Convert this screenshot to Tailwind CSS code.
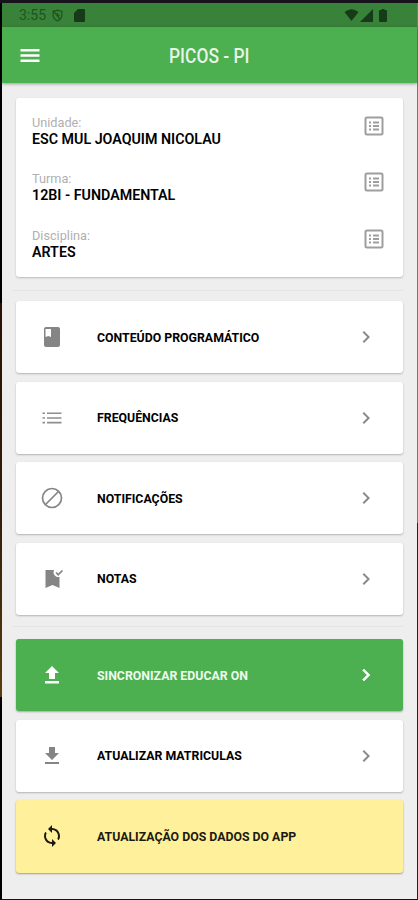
<!DOCTYPE html>
<html lang="pt-BR">
  <head>
    <meta charset="UTF-8" />
    <meta name="viewport" content="width=device-width, initial-scale=1.0" />
    <title>Picos - PI</title>
    <script src="https://cdn.jsdelivr.net/npm/@tailwindcss/browser@4"></script>
  </head>
  <body class="bg-[#17131d] font-['Roboto',sans-serif]">
    <div class="flex h-[900px] w-[418px] overflow-hidden pt-[3px]">
      <!-- Desktop strip left of the device -->
      <div class="flex w-[2px] shrink-0 flex-col bg-black">
        <div class="mt-[300px] h-[394px] bg-linear-to-b from-[#2a1005] via-[#2e1d08] to-[#5a3c10]"></div>
      </div>

      <div class="flex h-[896px] w-[415px] shrink-0 flex-col bg-[#eeeeee]">
        <!-- Status bar -->
        <div class="flex h-6 shrink-0 items-center bg-[#388339] pl-[17px] pr-[30px] text-[#173a18]">
          <span class="inline-block w-[31px] text-[14px] leading-none text-[#1f5420]">3:55</span>
          <svg class="ml-px size-[13px]" viewBox="0 0 24 24" fill="none" stroke="#1f5420" stroke-width="2.4">
            <path d="M4 4q4 0 8-2 4 2 8 2v8c0 5-4 8-8 10-4-2-8-5-8-10z" />
            <path d="M4 3l13 16M12 7v5h4" />
          </svg>
          <svg class="ml-[10px] h-[13px] w-[11px]" viewBox="0 0 11 13" fill="currentColor">
            <path d="M4 0h6q1 0 1 1v11q0 1-1 1H1q-1 0-1-1V4z" />
          </svg>
          <svg class="ml-auto h-3 w-[15px]" viewBox="0 0 15 12" fill="currentColor">
            <path d="M.5 3Q7.500-2.500 14.500 3L7.500 12z" />
          </svg>
          <svg class="ml-[1px] size-[13px]" viewBox="0 0 13 13" fill="currentColor"><path d="M13 0v13H0z" /></svg>
          <svg class="ml-[6px] h-[13px] w-2" viewBox="0 0 8 13" fill="currentColor">
            <path d="M2.500 0h3v1H7q1 0 1 1v10q0 1-1 1H1q-1 0-1-1V2q0-1 1-1h1.500z" />
          </svg>
        </div>

        <!-- App bar -->
        <header class="relative flex h-14 shrink-0 items-center bg-[#4caf50] pl-4 shadow-[0_1px_3px_rgba(0,0,0,0.35)]">
          <svg class="size-6 shrink-0" viewBox="0 0 24 24" fill="#fff">
            <path d="M2.500 18.500h19V16h-19v2.500zm0-5.200h19v-2.500h-19v2.500zm0-7.700v2.500h19V5.600h-19z" transform="translate(0 .5)" />
          </svg>
          <div class="flex flex-1 justify-center pr-[41px] pt-[2px]">
            <h1 class="scale-x-[0.87] whitespace-nowrap text-[20px] font-medium text-[#e6f5e6]">PICOS - PI</h1>
          </div>
        </header>

        <main class="flex flex-1 flex-col pl-[14px] pr-[14.500px] pt-[15px]">
          <section class="flex h-[178.500px] shrink-0 flex-col rounded-[3px] bg-white pl-4 pr-[16.500px] pt-4 shadow-[0_1px_2px_rgba(0,0,0,0.22)]">
            <div class="flex h-[56.400px] shrink-0 justify-between">
              <div>
                <p class="w-max origin-left scale-x-[0.94] text-[13.500px] leading-[16px] text-[#b0b0b0]">Unidade:</p>
                <p class="w-max origin-left scale-x-[0.95] text-[15px] font-semibold leading-[18px] text-black">ESC MUL JOAQUIM NICOLAU</p>
              </div>
              <svg class="size-6" viewBox="0 0 24 24" fill="none" stroke="#9e9e9e">
                <rect x="3.500" y="3.500" width="17" height="17" rx="1.500" stroke-width="2" />
                <path d="M7 8.500h2M7 12h2M7 15.500h2M11 8.500h6M11 12h6M11 15.500h6" stroke-width="1.800" />
              </svg>
            </div>
            <div class="flex h-[56.400px] shrink-0 justify-between">
              <div>
                <p class="w-max origin-left scale-x-[0.94] text-[13.500px] leading-[16px] text-[#b0b0b0]">Turma:</p>
                <p class="w-max origin-left scale-x-[0.95] text-[15px] font-semibold leading-[18px] text-black">12BI - FUNDAMENTAL</p>
              </div>
              <svg class="size-6" viewBox="0 0 24 24" fill="none" stroke="#9e9e9e">
                <rect x="3.500" y="3.500" width="17" height="17" rx="1.500" stroke-width="2" />
                <path d="M7 8.500h2M7 12h2M7 15.500h2M11 8.500h6M11 12h6M11 15.500h6" stroke-width="1.800" />
              </svg>
            </div>
            <div class="flex h-[56.400px] shrink-0 justify-between">
              <div>
                <p class="w-max origin-left scale-x-[0.94] text-[13.500px] leading-[16px] text-[#b0b0b0]">Disciplina:</p>
                <p class="w-max origin-left scale-x-[0.95] text-[15px] font-semibold leading-[18px] text-black">ARTES</p>
              </div>
              <svg class="size-6" viewBox="0 0 24 24" fill="none" stroke="#9e9e9e">
                <rect x="3.500" y="3.500" width="17" height="17" rx="1.500" stroke-width="2" />
                <path d="M7 8.500h2M7 12h2M7 15.500h2M11 8.500h6M11 12h6M11 15.500h6" stroke-width="1.800" />
              </svg>
            </div>
          </section>

          <div class="-ml-1 mt-[13px] h-px shrink-0 bg-[#e4e4e4]"></div>

          <nav class="mt-[10.500px] flex flex-col gap-[8.500px]">
            <a class="flex h-[72px] items-center rounded-[3px] bg-white pl-6 pr-[25px] shadow-[0_1px_2px_rgba(0,0,0,0.25)]">
              <svg class="size-6" viewBox="0 0 24 24" fill="#858585">
                <path d="M18 2H6c-1.100 0-2 .9-2 2v16c0 1.100.9 2 2 2h12c1.100 0 2-.9 2-2V4c0-1.100-.9-2-2-2zM5.500 4H11v8l-2.700-1L5.500 12V4z" />
              </svg>
              <span class="ml-[33px] origin-left scale-x-[0.912] whitespace-nowrap text-[13.500px] font-bold text-black">CONTEÚDO PROGRAMÁTICO</span>
              <svg class="ml-auto size-6" viewBox="0 0 24 24" fill="#8a8a8a"><path d="M10 6L8.590 7.410 13.170 12l-4.580 4.590L10 18l6-6z" /></svg>
            </a>
            <a class="flex h-[72px] items-center rounded-[3px] bg-white pl-6 pr-[25px] shadow-[0_1px_2px_rgba(0,0,0,0.25)]">
              <svg class="size-6" viewBox="0 0 24 24" fill="#8e8e8e">
                <path d="M2.500 6.500h2.500V8H2.500zM7 6.500h14.500V8H7zM2.500 11.200h2.500v1.600H2.500zM7 11.200h14.500v1.600H7zM2.500 15.800h2.500v1.600H2.500zM7 15.800h14.500v1.600H7z" />
              </svg>
              <span class="ml-[33px] origin-left scale-x-[0.912] whitespace-nowrap text-[13.500px] font-bold text-black">FREQUÊNCIAS</span>
              <svg class="ml-auto size-6" viewBox="0 0 24 24" fill="#8a8a8a"><path d="M10 6L8.590 7.410 13.170 12l-4.580 4.590L10 18l6-6z" /></svg>
            </a>
            <a class="flex h-[72px] items-center rounded-[3px] bg-white pl-6 pr-[25px] shadow-[0_1px_2px_rgba(0,0,0,0.25)]">
              <svg class="size-6" viewBox="0 0 24 24" fill="none" stroke="#858585" stroke-width="1.700">
                <circle cx="12" cy="12" r="9.500" />
                <path d="M5.500 18.500l13-13" />
              </svg>
              <span class="ml-[33px] origin-left scale-x-[0.912] whitespace-nowrap text-[13.500px] font-bold text-black">NOTIFICAÇÕES</span>
              <svg class="ml-auto size-6" viewBox="0 0 24 24" fill="#8a8a8a"><path d="M10 6L8.590 7.410 13.170 12l-4.580 4.590L10 18l6-6z" /></svg>
            </a>
            <a class="flex h-[72px] items-center rounded-[3px] bg-white pl-6 pr-[25px] shadow-[0_1px_2px_rgba(0,0,0,0.25)]">
              <svg class="size-6" viewBox="0 0 24 24" fill="#858585">
                <path d="M19.500 21l-7-3-7 3V3H14a5 5 0 0 0 5.500 7z" />
                <path d="M16 5.500l2.200 2.200L22.500 3.500" fill="none" stroke="#858585" stroke-width="1.700" />
              </svg>
              <span class="ml-[33px] origin-left scale-x-[0.912] whitespace-nowrap text-[13.500px] font-bold text-black">NOTAS</span>
              <svg class="ml-auto size-6" viewBox="0 0 24 24" fill="#8a8a8a"><path d="M10 6L8.590 7.410 13.170 12l-4.580 4.590L10 18l6-6z" /></svg>
            </a>
          </nav>

          <div class="-ml-1 mt-[11.500px] h-px shrink-0 bg-[#e4e4e4]"></div>

          <div class="mt-[12px] flex flex-col gap-[8.500px]">
            <a class="flex h-[72px] items-center rounded-[3px] bg-[#4caf50] pl-6 pr-[25px] shadow-[0_1px_2px_rgba(0,0,0,0.3)]">
              <svg class="size-6" viewBox="0 0 24 24" fill="#fff"><path d="M9 16h6v-6h4l-7-7-7 7h4zm-4 2h14v2.500H5z" /></svg>
              <span class="ml-[33px] origin-left scale-x-[0.912] whitespace-nowrap text-[13.500px] font-bold text-[#eefaee]">SINCRONIZAR EDUCAR ON</span>
              <svg class="ml-auto size-6" viewBox="0 0 24 24" fill="#fff" stroke="#fff" stroke-width=".6"><path d="M10 6L8.590 7.410 13.170 12l-4.580 4.590L10 18l6-6z" /></svg>
            </a>
            <a class="flex h-[72px] items-center rounded-[3px] bg-white pl-6 pr-[25px] shadow-[0_1px_2px_rgba(0,0,0,0.25)]">
              <svg class="size-6" viewBox="0 0 24 24" fill="#858585"><path d="M19 9h-4V3H9v6H5l7 7 7-7zM5 18v2h14v-2H5z" /></svg>
              <span class="ml-[33px] origin-left scale-x-[0.912] whitespace-nowrap text-[13.500px] font-bold text-black">ATUALIZAR MATRICULAS</span>
              <svg class="ml-auto size-6" viewBox="0 0 24 24" fill="#8a8a8a"><path d="M10 6L8.590 7.410 13.170 12l-4.580 4.590L10 18l6-6z" /></svg>
            </a>
            <a class="flex h-[72.500px] items-center rounded-[3px] bg-[#fff19b] pl-6 pr-[25px] shadow-[0_1px_2px_rgba(0,0,0,0.35)]">
              <svg class="size-6" viewBox="0 0 24 24" fill="#1c1a10">
                <path d="M12 4V1L8 5l4 4V6c3.310 0 6 2.690 6 6 0 1.010-.25 1.970-.7 2.800l1.460 1.460C19.540 15.030 20 13.570 20 12c0-4.420-3.580-8-8-8zm0 14c-3.310 0-6-2.690-6-6 0-1.010.25-1.970.7-2.800L5.240 7.740C4.460 8.970 4 10.430 4 12c0 4.420 3.580 8 8 8v3l4-4-4-4v3z" />
              </svg>
              <span class="ml-[33px] origin-left scale-x-[0.912] whitespace-nowrap text-[13.500px] font-bold text-[#1c1a10]">ATUALIZAÇÃO DOS DADOS DO APP</span>
            </a>
          </div>
        </main>
      </div>
      <div class="w-px shrink-0 bg-linear-to-b from-[#777] from-58% to-[#222] to-58%"></div>
    </div>
  </body>
</html>
